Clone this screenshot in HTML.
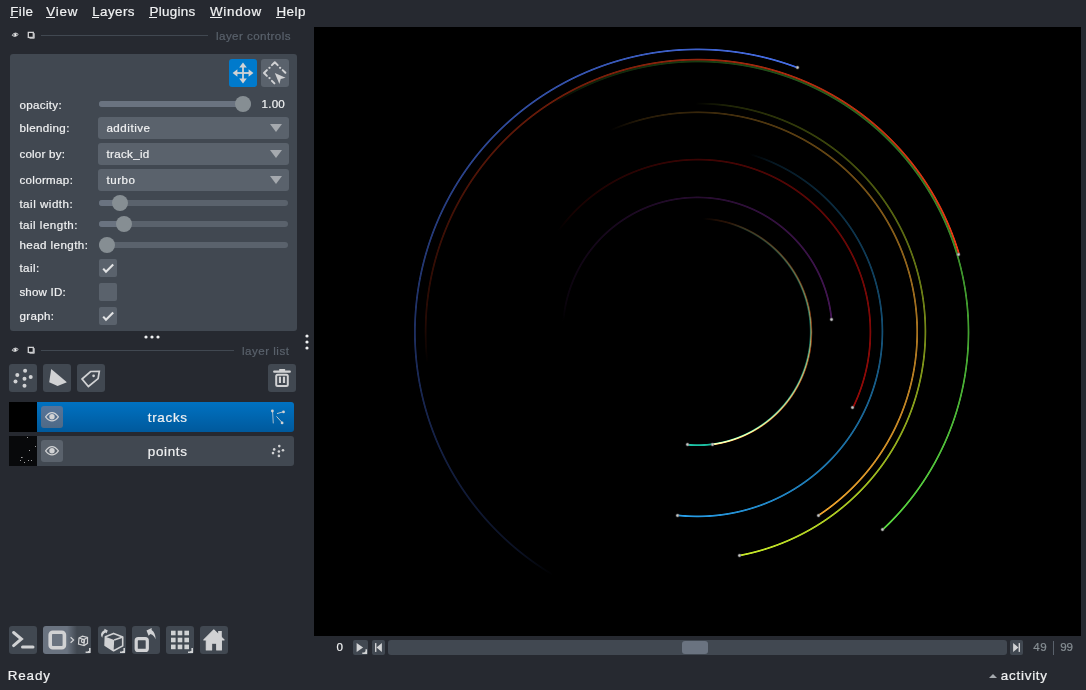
<!DOCTYPE html>
<html><head><meta charset="utf-8"><style>
*{margin:0;padding:0;box-sizing:border-box}
html,body{width:1086px;height:690px;overflow:hidden;background:#262930;font-family:"Liberation Sans",sans-serif;color:#f0f1f2}
.a{position:absolute}
.t{position:absolute;white-space:nowrap;line-height:1;-webkit-text-stroke:0.2px currentColor}
.btn{position:absolute;background:#414851;border-radius:3px;width:28px;height:28px}
.combo{position:absolute;left:98px;width:191px;height:22px;background:#5a626c;border-radius:3px}
.arr{position:absolute;left:172px;top:7px;width:0;height:0;border-left:6.5px solid transparent;border-right:6.5px solid transparent;border-top:8px solid #a5a9ae}
.trk{position:absolute;left:99px;width:189px;height:6px;border-radius:3px;background:#5a626c;overflow:hidden}
.fill{position:absolute;left:0;top:0;height:6px;background:#6a7380}
.hdl{position:absolute;width:16px;height:16px;border-radius:50%;background:#868e93}
.cb{position:absolute;left:99px;width:18px;height:18px;background:#5a626c;border-radius:2px}
.ring{position:absolute;border-radius:50%;mix-blend-mode:plus-lighter}
.hd{position:absolute;width:5px;height:5px;border-radius:50%;background:radial-gradient(circle,#c8c8c8 0,#a0a0a0 1px,rgba(120,120,120,.3) 1.8px,transparent 2.5px)}
</style></head><body>
<div class="t" style="left:10.30px;top:4.56px;font-size:13.4px;letter-spacing:0.36px;color:#f0f1f2">File</div>
<div class="t" style="left:46.30px;top:4.56px;font-size:13.4px;letter-spacing:0.78px;color:#f0f1f2">View</div>
<div class="t" style="left:92.20px;top:4.56px;font-size:13.4px;letter-spacing:0.43px;color:#f0f1f2">Layers</div>
<div class="t" style="left:149.40px;top:4.56px;font-size:13.4px;letter-spacing:0.32px;color:#f0f1f2">Plugins</div>
<div class="t" style="left:210.00px;top:4.56px;font-size:13.4px;letter-spacing:0.71px;color:#f0f1f2">Window</div>
<div class="t" style="left:276.40px;top:4.56px;font-size:13.4px;letter-spacing:0.53px;color:#f0f1f2">Help</div>
<div class="a" style="left:10px;top:17px;width:8px;height:1px;background:#f0f1f2"></div>
<div class="a" style="left:46px;top:17px;width:9px;height:1px;background:#f0f1f2"></div>
<div class="a" style="left:92px;top:17px;width:7px;height:1px;background:#f0f1f2"></div>
<div class="a" style="left:149px;top:17px;width:8px;height:1px;background:#f0f1f2"></div>
<div class="a" style="left:210px;top:17px;width:12px;height:1px;background:#f0f1f2"></div>
<div class="a" style="left:276px;top:17px;width:9px;height:1px;background:#f0f1f2"></div>
<div class="a" style="left:41px;top:35px;width:167px;height:1px;background:#414851"></div>
<div class="t" style="left:216.00px;top:30.18px;font-size:11.6px;letter-spacing:0.43px;color:#5a626c">layer controls</div>
<div class="a" style="left:10px;top:54px;width:287px;height:277px;background:#414851;border-radius:3px"></div>
<div class="a" style="left:229px;top:59px;width:28px;height:28px;background:#007acc;border-radius:3px"></div>
<div class="a" style="left:261px;top:59px;width:28px;height:28px;background:#5a626c;border-radius:3px"></div>
<div class="t" style="left:19.40px;top:98.78px;font-size:11.6px;letter-spacing:0.34px;color:#f0f1f2">opacity:</div>
<div class="t" style="left:19.40px;top:121.78px;font-size:11.6px;letter-spacing:0.37px;color:#f0f1f2">blending:</div>
<div class="t" style="left:19.40px;top:147.98px;font-size:11.6px;letter-spacing:0.22px;color:#f0f1f2">color by:</div>
<div class="t" style="left:19.40px;top:173.68px;font-size:11.6px;letter-spacing:0.32px;color:#f0f1f2">colormap:</div>
<div class="t" style="left:19.40px;top:198.08px;font-size:11.6px;letter-spacing:0.50px;color:#f0f1f2">tail width:</div>
<div class="t" style="left:19.40px;top:218.68px;font-size:11.6px;letter-spacing:0.48px;color:#f0f1f2">tail length:</div>
<div class="t" style="left:19.40px;top:239.48px;font-size:11.6px;letter-spacing:0.43px;color:#f0f1f2">head length:</div>
<div class="t" style="left:19.40px;top:261.88px;font-size:11.6px;letter-spacing:0.47px;color:#f0f1f2">tail:</div>
<div class="t" style="left:19.40px;top:285.78px;font-size:11.6px;letter-spacing:0.17px;color:#f0f1f2">show ID:</div>
<div class="t" style="left:19.40px;top:309.58px;font-size:11.6px;letter-spacing:0.35px;color:#f0f1f2">graph:</div>
<div class="trk" style="top:101px;width:152px"><div class="fill" style="width:152px"></div></div>
<div class="hdl" style="left:235px;top:96px"></div>
<div class="t" style="left:261.60px;top:97.88px;font-size:11.6px;letter-spacing:0.19px;color:#f0f1f2">1.00</div>
<div class="combo" style="top:117px"><div class="arr"></div></div>
<div class="t" style="left:106.40px;top:121.98px;font-size:11.6px;letter-spacing:0.53px;color:#f0f1f2">additive</div>
<div class="combo" style="top:143px"><div class="arr"></div></div>
<div class="t" style="left:106.40px;top:148.08px;font-size:11.6px;letter-spacing:0.33px;color:#f0f1f2">track_id</div>
<div class="combo" style="top:169px"><div class="arr"></div></div>
<div class="t" style="left:106.40px;top:174.18px;font-size:11.6px;letter-spacing:0.55px;color:#f0f1f2">turbo</div>
<div class="trk" style="top:200px"><div class="fill" style="width:20.9px"></div></div>
<div class="hdl" style="left:111.9px;top:195px"></div>
<div class="trk" style="top:221px"><div class="fill" style="width:24.9px"></div></div>
<div class="hdl" style="left:115.9px;top:216px"></div>
<div class="trk" style="top:242px"><div class="fill" style="width:8.0px"></div></div>
<div class="hdl" style="left:99.0px;top:237px"></div>
<div class="cb" style="top:259px"></div>
<div class="cb" style="top:283px"></div>
<div class="cb" style="top:307px"></div>
<div class="a" style="left:41px;top:350px;width:193px;height:1px;background:#414851"></div>
<div class="t" style="left:242.00px;top:345.18px;font-size:11.6px;letter-spacing:0.49px;color:#5a626c">layer list</div>
<div class="btn" style="left:9px;top:364px"></div>
<div class="btn" style="left:43px;top:364px"></div>
<div class="btn" style="left:77px;top:364px"></div>
<div class="btn" style="left:268px;top:364px"></div>
<div class="a" style="left:9px;top:402px;width:285px;height:30px;background:linear-gradient(#0072c2,#00599c);border-radius:0 3px 3px 0"></div>
<div class="a" style="left:9px;top:402px;width:28px;height:30px;background:#000"></div>
<div class="a" style="left:41px;top:406px;width:22px;height:22px;background:linear-gradient(#56749a,#506a86);border-radius:3px"></div>
<div class="t" style="left:147.80px;top:410.66px;font-size:13.4px;letter-spacing:0.69px;color:#f0f1f2">tracks</div>
<div class="a" style="left:9px;top:436px;width:285px;height:30px;background:#414851;border-radius:0 3px 3px 0"></div>
<div class="a" style="left:9px;top:436px;width:28px;height:30px;background:#08090b"></div>
<div class="a" style="left:41px;top:440px;width:22px;height:22px;background:#5a626c;border-radius:3px"></div>
<div class="t" style="left:147.80px;top:444.56px;font-size:13.4px;letter-spacing:0.69px;color:#f0f1f2">points</div>
<div class="a" style="left:314px;top:27px;width:767px;height:609px;overflow:hidden;background:#000"><div class="a" style="left:-314px;top:-27px;width:1086px;height:690px"><div class="ring" style="left:413.4px;top:47.6px;width:568.4px;height:568.4px;background:conic-gradient(from -149.24deg,rgba(70,110,230,0) 0deg,rgba(70,110,230,0.15) 8deg,rgb(70,110,230) 170.0deg,transparent 170.0deg);-webkit-mask:radial-gradient(circle closest-side,transparent 281.3px,#000 282.1px,#000 283.1px,transparent 283.9px);mask:radial-gradient(circle closest-side,transparent 281.3px,#000 282.1px,#000 283.1px,transparent 283.9px)"></div>
<div class="ring" style="left:423.6px;top:57.8px;width:548.0px;height:548.0px;background:conic-gradient(from -96.43deg,rgba(240,60,20,0) 0deg,rgba(240,60,20,0.15) 8deg,rgb(240,60,20) 170.0deg,transparent 170.0deg);-webkit-mask:radial-gradient(circle closest-side,transparent 271.1px,#000 271.9px,#000 272.9px,transparent 273.7px);mask:radial-gradient(circle closest-side,transparent 271.1px,#000 271.9px,#000 272.9px,transparent 273.7px)"></div>
<div class="ring" style="left:425.5px;top:59.7px;width:544.2px;height:544.2px;background:conic-gradient(from -33.00deg,rgba(90,215,65,0) 0deg,rgba(90,215,65,0.15) 8deg,rgb(90,215,65) 170.0deg,transparent 170.0deg);-webkit-mask:radial-gradient(circle closest-side,transparent 269.2px,#000 270.0px,#000 271.0px,transparent 271.8px);mask:radial-gradient(circle closest-side,transparent 269.2px,#000 270.0px,#000 271.0px,transparent 271.8px)"></div>
<div class="ring" style="left:468.1px;top:102.3px;width:459.0px;height:459.0px;background:conic-gradient(from -0.54deg,rgba(200,235,40,0) 0deg,rgba(200,235,40,0.15) 8deg,rgb(200,235,40) 170.0deg,transparent 170.0deg);-webkit-mask:radial-gradient(circle closest-side,transparent 226.6px,#000 227.4px,#000 228.4px,transparent 229.2px);mask:radial-gradient(circle closest-side,transparent 226.6px,#000 227.4px,#000 228.4px,transparent 229.2px)"></div>
<div class="ring" style="left:476.3px;top:110.5px;width:442.6px;height:442.6px;background:conic-gradient(from -23.40deg,rgba(240,165,45,0) 0deg,rgba(240,165,45,0.15) 8deg,rgb(240,165,45) 170.0deg,transparent 170.0deg);-webkit-mask:radial-gradient(circle closest-side,transparent 218.4px,#000 219.2px,#000 220.2px,transparent 221.0px);mask:radial-gradient(circle closest-side,transparent 218.4px,#000 219.2px,#000 220.2px,transparent 221.0px)"></div>
<div class="ring" style="left:511.1px;top:145.3px;width:373.0px;height:373.0px;background:conic-gradient(from 16.40deg,rgba(40,160,235,0) 0deg,rgba(40,160,235,0.15) 8deg,rgb(40,160,235) 170.0deg,transparent 170.0deg);-webkit-mask:radial-gradient(circle closest-side,transparent 183.6px,#000 184.4px,#000 185.4px,transparent 186.2px);mask:radial-gradient(circle closest-side,transparent 183.6px,#000 184.4px,#000 185.4px,transparent 186.2px)"></div>
<div class="ring" style="left:523.6px;top:157.8px;width:348.0px;height:348.0px;background:conic-gradient(from -54.10deg,rgba(150,10,8,0) 0deg,rgba(150,10,8,0.15) 8deg,rgb(150,10,8) 170.0deg,transparent 170.0deg);-webkit-mask:radial-gradient(circle closest-side,transparent 171.1px,#000 171.9px,#000 172.9px,transparent 173.7px);mask:radial-gradient(circle closest-side,transparent 171.1px,#000 171.9px,#000 172.9px,transparent 173.7px)"></div>
<div class="ring" style="left:561.4px;top:195.6px;width:272.4px;height:272.4px;background:conic-gradient(from -85.45deg,rgba(68,22,84,0) 0deg,rgba(68,22,84,0.15) 8deg,rgb(68,22,84) 170.0deg,transparent 170.0deg);-webkit-mask:radial-gradient(circle closest-side,transparent 133.3px,#000 134.1px,#000 135.1px,transparent 135.9px);mask:radial-gradient(circle closest-side,transparent 133.3px,#000 134.1px,#000 135.1px,transparent 135.9px)"></div>
<div class="ring" style="left:582.6px;top:216.8px;width:230.0px;height:230.0px;background:conic-gradient(from 2.60deg,rgba(230,100,30,0) 0deg,rgba(230,100,30,0.15) 8deg,rgb(230,100,30) 170.0deg,transparent 170.0deg);-webkit-mask:radial-gradient(circle closest-side,transparent 112.1px,#000 112.9px,#000 113.9px,transparent 114.7px);mask:radial-gradient(circle closest-side,transparent 112.1px,#000 112.9px,#000 113.9px,transparent 114.7px)"></div>
<div class="ring" style="left:582.8px;top:217.0px;width:229.6px;height:229.6px;background:conic-gradient(from 15.25deg,rgba(30,200,170,0) 0deg,rgba(30,200,170,0.15) 8deg,rgb(30,200,170) 170.0deg,transparent 170.0deg);-webkit-mask:radial-gradient(circle closest-side,transparent 111.9px,#000 112.7px,#000 113.7px,transparent 114.5px);mask:radial-gradient(circle closest-side,transparent 111.9px,#000 112.7px,#000 113.7px,transparent 114.5px)"></div>
<div class="hd" style="left:795.3px;top:65.0px"></div>
<div class="hd" style="left:956.4px;top:252.3px"></div>
<div class="hd" style="left:879.6px;top:527.1px"></div>
<div class="hd" style="left:736.8px;top:553.4px"></div>
<div class="hd" style="left:816.0px;top:512.7px"></div>
<div class="hd" style="left:674.5px;top:513.0px"></div>
<div class="hd" style="left:850.2px;top:404.6px"></div>
<div class="hd" style="left:829.1px;top:316.5px"></div>
<div class="hd" style="left:709.7px;top:441.8px"></div>
<div class="hd" style="left:684.7px;top:442.0px"></div></div></div>
<div class="btn" style="left:9px;top:626px"></div>
<div class="btn" style="left:98px;top:626px"></div>
<div class="btn" style="left:132px;top:626px"></div>
<div class="btn" style="left:166px;top:626px"></div>
<div class="btn" style="left:200px;top:626px"></div>
<div class="a" style="left:43px;top:626px;width:48px;height:28px;border-radius:3px;background:linear-gradient(90deg,#6a7380 0,#6a7380 24px,#414851 34px,#414851 48px)"></div>
<div class="t" style="left:336.50px;top:641.18px;font-size:11.6px;letter-spacing:0.00px;color:#f0f1f2">0</div>
<div class="btn" style="left:353px;top:640px;width:15px;height:15px;border-radius:2px"></div>
<div class="btn" style="left:372px;top:640px;width:13px;height:15px;border-radius:2px"></div>
<div class="a" style="left:388px;top:640px;width:619px;height:15px;background:#414851;border-radius:3px"></div>
<div class="a" style="left:682px;top:641px;width:26px;height:13px;background:#6a7380;border-radius:3px"></div>
<div class="btn" style="left:1010px;top:640px;width:13px;height:15px;border-radius:2px"></div>
<div class="t" style="left:1033.30px;top:641.38px;font-size:11.6px;letter-spacing:0.42px;color:#868e93">49</div>
<div class="a" style="left:1053px;top:641px;width:1px;height:14px;background:#5a626c"></div>
<div class="t" style="left:1060.30px;top:641.38px;font-size:11.6px;letter-spacing:-0.17px;color:#868e93">99</div>
<div class="t" style="left:7.70px;top:669.36px;font-size:13.4px;letter-spacing:0.89px;color:#f0f1f2">Ready</div>
<div class="a" style="left:988.5px;top:674px;width:0;height:0;border-left:4px solid transparent;border-right:4px solid transparent;border-bottom:4px solid #a5a9ae"></div>
<div class="t" style="left:1000.80px;top:669.46px;font-size:13.4px;letter-spacing:0.76px;color:#f0f1f2">activity</div>
<svg class="a" style="left:0;top:0" width="1086" height="690" viewBox="0 0 1086 690">
<defs>
<g id="hdr">
<path d="M11.6 35.2 Q15 30.6 18.7 34.2 Q15.6 39.2 11.6 35.2Z" fill="#c4c5c7"/>
<circle cx="13.9" cy="34.9" r="0.8" fill="#4a4d55"/><circle cx="16.9" cy="34.5" r="0.8" fill="#4a4d55"/>
<circle cx="15.3" cy="34.8" r="0.9" fill="#fafafa"/>
<rect x="28.3" y="32.4" width="5" height="5" fill="#1a1c21" stroke="#d1d2d4" stroke-width="1.3"/>
<path d="M29.5 38.3 H34.3 V33.2" fill="none" stroke="#b8babc" stroke-width="1"/>
</g>
<g id="eye">
<path d="M4.6 10.8 Q11 2.6 17.4 10.8 Q11 19 4.6 10.8Z" fill="none" stroke="#d1d2d4" stroke-width="1.25" stroke-linejoin="round"/>
<circle cx="11" cy="10.8" r="2.7" fill="#d1d2d4"/>
</g>
</defs>
<use href="#hdr"/>
<use href="#hdr" transform="translate(0,315)"/>
<g fill="#f0f1f2">
<circle cx="146" cy="337" r="1.6"/><circle cx="152" cy="337" r="1.6"/><circle cx="158" cy="337" r="1.6"/>
<circle cx="307" cy="336" r="1.6"/><circle cx="307" cy="342" r="1.6"/><circle cx="307" cy="348" r="1.6"/>
</g>
<!-- move icon -->
<g transform="translate(229,59)" fill="#d1d2d4">
<rect x="13.1" y="7" width="1.8" height="14"/><rect x="7" y="13.1" width="14" height="1.8"/>
<path d="M14 3.6 L17.8 8.4 L10.2 8.4Z M14 24.4 L17.8 19.6 L10.2 19.6Z M3.6 14 L8.4 10.2 L8.4 17.8Z M24.4 14 L19.6 10.2 L19.6 17.8Z"/>
</g>
<!-- select icon -->
<g transform="translate(261,59)" fill="none" stroke="#d1d2d4" stroke-width="2" stroke-linecap="round" stroke-linejoin="round">
<path d="M10.9 6.1 L13.8 3.2 L16.7 6.1"/>
<path d="M5.9 11.1 L3.0 14 L5.9 16.9"/>
<path d="M21.7 11.1 L24.4 13.8"/>
<path d="M10.9 21.9 L13.4 24.4"/>
</g>
<g transform="translate(261,59)" fill="#d1d2d4">
<circle cx="8.5" cy="8.8" r="1.15"/><circle cx="19.1" cy="8.8" r="1.15"/><circle cx="8.5" cy="19.1" r="1.15"/>
<path d="M13.8 14.1 L24.6 18.7 L19.7 19.9 L18.4 25Z"/>
</g>
<!-- checkmarks -->
<path d="M103.2 268.6 L106 271.8 L113.2 264.6" fill="none" stroke="#e2e3e4" stroke-width="2.1"/>
<path d="M103.2 316.6 L106 319.8 L113.2 312.6" fill="none" stroke="#e2e3e4" stroke-width="2.1"/>
<!-- layer buttons -->
<g transform="translate(9,364)" fill="#d1d2d4">
<circle cx="16.1" cy="6.7" r="2"/><circle cx="8.3" cy="11.1" r="2"/><circle cx="21.7" cy="12.9" r="2"/><circle cx="15.5" cy="14.8" r="2"/><circle cx="6.5" cy="17.5" r="2"/><circle cx="15.5" cy="21.8" r="2"/>
</g>
<path transform="translate(43,364)" d="M8.2 4.9 L23.9 18.3 L14.6 22.1 L6.2 18.3Z" fill="#d1d2d4"/>
<g transform="translate(77,364)">
<path d="M5.1 15 L13.6 7.5 L22.3 7.3 L21.1 14.6 L11.4 22.5Z" fill="none" stroke="#d1d2d4" stroke-width="1.7" stroke-linejoin="miter"/>
<circle cx="16.6" cy="11.8" r="1.35" fill="#d1d2d4"/>
</g>
<g transform="translate(268,364)" fill="#d1d2d4">
<rect x="5.1" y="6.4" width="17.8" height="2.4" rx="1"/>
<rect x="11.1" y="4.9" width="6" height="2" rx="0.5"/>
<rect x="8.2" y="10.7" width="11.6" height="11.2" rx="1.5" fill="none" stroke="#d1d2d4" stroke-width="2"/>
<rect x="10.9" y="12.7" width="2.1" height="6.3"/><rect x="14.9" y="12.7" width="2.2" height="6.3"/>
</g>
<!-- eyes -->
<use href="#eye" transform="translate(41,406)"/>
<use href="#eye" transform="translate(41,440)"/>
<!-- tracks icon -->
<g fill="#d1d2d4" stroke="#d1d2d4">
<circle cx="272.4" cy="411" r="1.4" stroke="none"/><path d="M272.6 412 L273.3 423.4" stroke-width="0.8" fill="none"/>
<circle cx="283.5" cy="411.9" r="1.4" stroke="none"/><path d="M277 413.6 L282.5 412" stroke-width="0.9" fill="none"/>
<circle cx="282.1" cy="422.9" r="1.4" stroke="none"/><path d="M276.5 416.4 L281.6 422" stroke-width="0.9" fill="none"/>
</g>
<g fill="#d1d2d4">
<circle cx="279.3" cy="446.1" r="1.3"/><circle cx="274.2" cy="449.4" r="1.3"/><circle cx="283" cy="450.3" r="1.3"/><circle cx="278.9" cy="451.5" r="1.3"/><circle cx="273" cy="453.1" r="1.3"/><circle cx="278.9" cy="455.9" r="1.3"/>
</g>
<!-- points thumbnail -->
<g fill="#a0a0a0">
<rect x="27" y="437" width="1" height="1"/><rect x="35" y="446" width="1" height="1"/><rect x="29" y="450" width="1" height="1"/><rect x="21" y="457" width="1.6" height="1"/><rect x="20" y="460" width="1" height="1"/><rect x="24" y="462" width="1" height="1"/><rect x="28" y="460" width="1" height="1"/><rect x="31" y="460" width="1" height="1"/>
</g>
<!-- bottom toolbar icons -->
<g transform="translate(9,626)" fill="none" stroke="#d1d2d4" stroke-width="3" stroke-linecap="round">
<path d="M4.6 6.5 L12.4 13 L4.6 19.6"/><path d="M13.5 21 L24 21"/>
</g>
<g transform="translate(43,626)">
<rect x="7.2" y="6.3" width="14.2" height="15.4" rx="2.5" fill="none" stroke="#d1d2d4" stroke-width="3.6"/>
<path d="M27.6 11.2 L30.6 14 L27.6 16.8" fill="none" stroke="#d1d2d4" stroke-width="1.2"/>
<g fill="none" stroke="#d1d2d4" stroke-width="1.2">
<path d="M36 12 L39.5 10.2 L44.5 11.5 L44.5 17.3 L41 19.5 L35.5 18 Z"/>
<path d="M36 12 L41 13.6 L44.5 11.5 M41 13.6 L41 19.5"/>
<circle cx="40" cy="15" r="1.6"/>
</g>
<path d="M46.8 22 V26.2 H42.6 M46.8 24.4 L45 26.2" fill="none" stroke="#d1d2d4" stroke-width="1.6"/>
</g>
<g transform="translate(98,626)">
<path d="M15.6 7.4 L24.7 11.1 L24.7 19.9 L15.6 24.7 L7.1 19.3 L7.4 10.8Z" fill="#414851" stroke="#d1d2d4" stroke-width="1.6" stroke-linejoin="round"/>
<path d="M7.4 10.8 L16.2 14.1 L15.6 24.7 L7.1 19.3Z" fill="#d1d2d4"/>
<path d="M16.2 14.1 L24.7 11.1" stroke="#d1d2d4" stroke-width="1.6"/>
<path d="M4.3 11.8 C2.2 9.5 2.8 5.8 6.3 4.3 L6.5 2.8 L9.8 4.4 L8.5 7.6 L7.9 6.4 C5.3 7.2 4.6 9 4.3 11.8Z" fill="#d1d2d4"/>
<path d="M26.2 22 V26.2 H22 M26.2 24.4 L24.4 26.2" fill="none" stroke="#d1d2d4" stroke-width="1.6"/>
</g>
<g transform="translate(132,626)">
<rect x="4.2" y="12.7" width="11.1" height="11.7" rx="2" fill="none" stroke="#d1d2d4" stroke-width="3.2"/>
<path d="M14.5 4.5 L19.7 2.0 L19.6 3.9 C22.2 5.4 23.6 9 23.6 13.3 C22.6 10.6 21 8.8 18.4 7.9 L16.6 9.8 Z" fill="#d1d2d4"/>
</g>
<g transform="translate(166,626)" fill="#d1d2d4">
<rect x="5" y="4.7" width="4.6" height="4.6"/><rect x="11.7" y="4.7" width="4.6" height="4.6"/><rect x="18.4" y="4.7" width="4.6" height="4.6"/>
<rect x="5" y="11.7" width="4.6" height="4.6"/><rect x="11.7" y="11.7" width="4.6" height="4.6"/><rect x="18.4" y="11.7" width="4.6" height="4.6"/>
<rect x="5" y="18.6" width="4.6" height="4.6"/><rect x="11.7" y="18.6" width="4.6" height="4.6"/><rect x="18.4" y="18.6" width="4.6" height="4.6"/>
<path d="M26.2 22 V26.2 H22 M26.2 24.4 L24.4 26.2" fill="none" stroke="#d1d2d4" stroke-width="1.6"/>
</g>
<g transform="translate(200,626)" fill="#d1d2d4">
<path d="M13.8 3.8 L24.1 13.9 L21.4 13.9 L21.4 23.9 L16.7 23.9 L16.7 17.3 L11.6 17.3 L11.6 23.9 L6.3 23.9 L6.3 13.9 L3.8 13.9Z" stroke="#d1d2d4" stroke-width="1.1" stroke-linejoin="round"/>
<rect x="18.1" y="5" width="3.7" height="6"/>
</g>
<!-- dims icons -->
<g transform="translate(353,640)" fill="#d1d2d4">
<path d="M3.6 2.9 L10.1 7.5 L3.6 11.9Z"/><path d="M13.3 9.3 V13.3 H9.3 M13.3 11.5 L11.5 13.3" fill="none" stroke="#d1d2d4" stroke-width="1.6"/>
</g>
<g transform="translate(372,640)" fill="#d1d2d4">
<rect x="3" y="3.1" width="1.4" height="8.8"/><path d="M9.9 3.1 L4.5 7.5 L9.9 11.9Z"/>
</g>
<g transform="translate(1010,640)" fill="#d1d2d4">
<rect x="8.6" y="3.1" width="1.4" height="8.8"/><path d="M3.1 3.1 L8.5 7.5 L3.1 11.9Z"/>
</g>
</svg>

</body></html>
